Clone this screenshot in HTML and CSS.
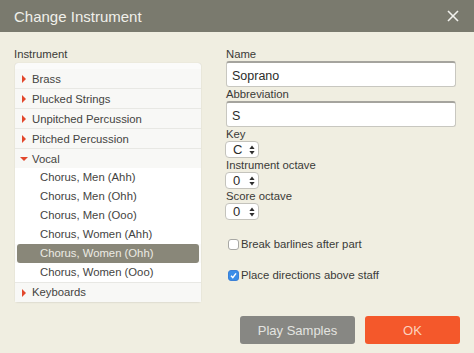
FILE: index.html
```html
<!DOCTYPE html>
<html lang="en">
<head>
  <meta charset="UTF-8" />
  <title>Change Instrument</title>
  <link rel="stylesheet" href="styles.css">
</head>

<body>
  <div class="dialog">
    <div class="titlebar">
      <span class="title">Change Instrument</span>
      <svg class="close" width="12" height="12" viewBox="0 0 12 12">
        <line x1="1" y1="1" x2="11" y2="11" />
        <line x1="11" y1="1" x2="1" y2="11" />
      </svg>
    </div>

    <div class="content">
      <div class="left-col">
        <div class="label">Instrument</div>
        <div class="list">
          <div class="group"><span class="arrow"></span>Brass</div>
          <div class="group"><span class="arrow"></span>Plucked Strings</div>
          <div class="group"><span class="arrow"></span>Unpitched Percussion</div>
          <div class="group"><span class="arrow"></span>Pitched Percussion</div>
          <div class="group open"><span class="arrow down"></span>Vocal</div>
          <div class="item">Chorus, Men (Ahh)</div>
          <div class="item">Chorus, Men (Ohh)</div>
          <div class="item">Chorus, Men (Ooo)</div>
          <div class="item">Chorus, Women (Ahh)</div>
          <div class="item selected">Chorus, Women (Ohh)</div>
          <div class="item last">Chorus, Women (Ooo)</div>
          <div class="group final"><span class="arrow"></span>Keyboards</div>
        </div>
      </div>

      <div class="right-col">
        <div class="label">Name</div>
        <div class="text-input">Soprano</div>
        <div class="label">Abbreviation</div>
        <div class="text-input">S</div>
        <div class="label">Key</div>
        <div class="spinner"><span>C</span>
          <svg class="updown" width="6" height="10" viewBox="0 0 6 10"><polygon points="3,0.5 5.6,4 0.4,4" /><polygon points="0.4,6 5.6,6 3,9.5" /></svg>
        </div>
        <div class="label">Instrument octave</div>
        <div class="spinner"><span>0</span>
          <svg class="updown" width="6" height="10" viewBox="0 0 6 10"><polygon points="3,0.5 5.6,4 0.4,4" /><polygon points="0.4,6 5.6,6 3,9.5" /></svg>
        </div>
        <div class="label">Score octave</div>
        <div class="spinner"><span>0</span>
          <svg class="updown" width="6" height="10" viewBox="0 0 6 10"><polygon points="3,0.5 5.6,4 0.4,4" /><polygon points="0.4,6 5.6,6 3,9.5" /></svg>
        </div>

        <div class="check-row first-check"><span class="checkbox"></span>Break barlines after part</div>
        <div class="check-row"><span class="checkbox checked">
          <svg width="9" height="9" viewBox="0 0 9 9"><polyline points="2,4.8 3.8,6.6 7,2.4" /></svg>
        </span>Place directions above staff</div>
      </div>
    </div>

    <div class="buttons">
      <button class="btn play">Play Samples</button>
      <button class="btn ok">OK</button>
    </div>
  </div>
</body>
</html>
```

FILE: styles.css
```css
body {
  margin: 0;
  font-family: "Liberation Sans", Arial, sans-serif;
  background: #f0eee1;
  color: #3c3c3a;
}
.dialog {
  width: 474px;
  height: 353px;
  background: #f0eee1;
}
.titlebar {
  height: 32px;
  background: #7a7a6e;
  display: flex;
  align-items: center;
  justify-content: space-between;
  padding: 0 14px 0 14px;
  box-sizing: border-box;
}
.title {
  color: #f0f0ea;
  font-size: 15px;
}
.close {
  margin-right: 1px;
}
.close line {
  stroke: #f2f2ee;
  stroke-width: 1.6;
}
.content {
  display: flex;
  padding: 15px 0 0 15px;
}
.label {
  font-size: 11.3px;
  line-height: 14px;
  color: #3a3a38;
}
.left-col {
  width: 186px;
}
.left-col .label {
  margin-left: -1px;
  margin-bottom: 2px;
}
.list {
  background: #fbfbfa;
  border-radius: 3px;
  box-shadow: 0 0 1px rgba(0,0,0,0.18), 0 1px 2px rgba(0,0,0,0.06);
  padding-top: 6px;
  font-size: 11.3px;
  color: #444442;
}
.group {
  height: 20px;
  line-height: 20px;
  padding-left: 17px;
  border-bottom: 1px solid #e8e8e4;
  box-sizing: border-box;
  background: #f8f8f6;
  position: relative;
}
.group.open {
  border-bottom: none;
  height: 19px;
}
.group.final {
  border-bottom: none;
  border-top: 1px solid #e8e8e4;
  height: 20px;
  line-height: 19px;
}
.arrow {
  position: absolute;
  left: 7px;
  top: 6px;
  width: 0;
  height: 0;
  border-top: 4px solid transparent;
  border-bottom: 4px solid transparent;
  border-left: 4px solid #e2472c;
}
.arrow.down {
  left: 5px;
  top: 8px;
  border-left: 4px solid transparent;
  border-right: 4px solid transparent;
  border-top: 4px solid #e2472c;
  border-bottom: none;
}
.item {
  height: 19px;
  line-height: 19px;
  padding-left: 25px;
  background: #ffffff;
}
.item.selected {
  background: #898779;
  color: #ecebe4;
  margin: 0 2px;
  padding-left: 23px;
  border-radius: 3px;
}
.right-col {
  margin-left: 25px;
  width: 230px;
}
.text-input {
  height: 26px;
  line-height: 27px;
  box-sizing: border-box;
  background: #ffffff;
  border: 1px solid #c8c7c0;
  border-top: 2px solid #a5a49e;
  border-radius: 3px;
  padding-left: 5px;
  font-size: 12.5px;
  color: #2c2c2a;
}
.spinner {
  width: 34px;
  height: 17px;
  box-sizing: border-box;
  background: #ffffff;
  border: 1px solid #c4c3bc;
  border-radius: 4px;
  margin-left: -1px;
  display: flex;
  align-items: center;
  justify-content: space-between;
  padding: 0 3px 0 7px;
  font-size: 13px;
  color: #2c2c2a;
}
.updown polygon {
  fill: #2e2e2e;
}
.check-row {
  display: flex;
  align-items: center;
  font-size: 11.3px;
  height: 14px;
  margin-top: 17px;
  color: #3a3a38;
}
.check-row.first-check {
  margin-top: 17px;
}
.checkbox {
  width: 11px;
  height: 11px;
  box-sizing: border-box;
  border: 1px solid #a8a8a4;
  border-radius: 3px;
  background: #ffffff;
  margin: 0 2px 0 2px;
  display: flex;
  align-items: center;
  justify-content: center;
}
.checkbox.checked {
  background: #3b8ee8;
  border-color: #3b80d6;
}
.checkbox polyline {
  fill: none;
  stroke: #ffffff;
  stroke-width: 1.5;
}
.buttons {
  display: flex;
  justify-content: flex-end;
  gap: 10px;
  padding: 0 14px 0 0;
  margin-top: 14px;
}
.btn {
  height: 28px;
  border: none;
  border-radius: 3px;
  font-family: "Liberation Sans", Arial, sans-serif;
  font-size: 13px;
  cursor: pointer;
}
.play {
  width: 115px;
  background: #878783;
  color: #e4e4e0;
}
.ok {
  width: 95px;
  background: #f4582b;
  color: #fbd2bf;
}
```
